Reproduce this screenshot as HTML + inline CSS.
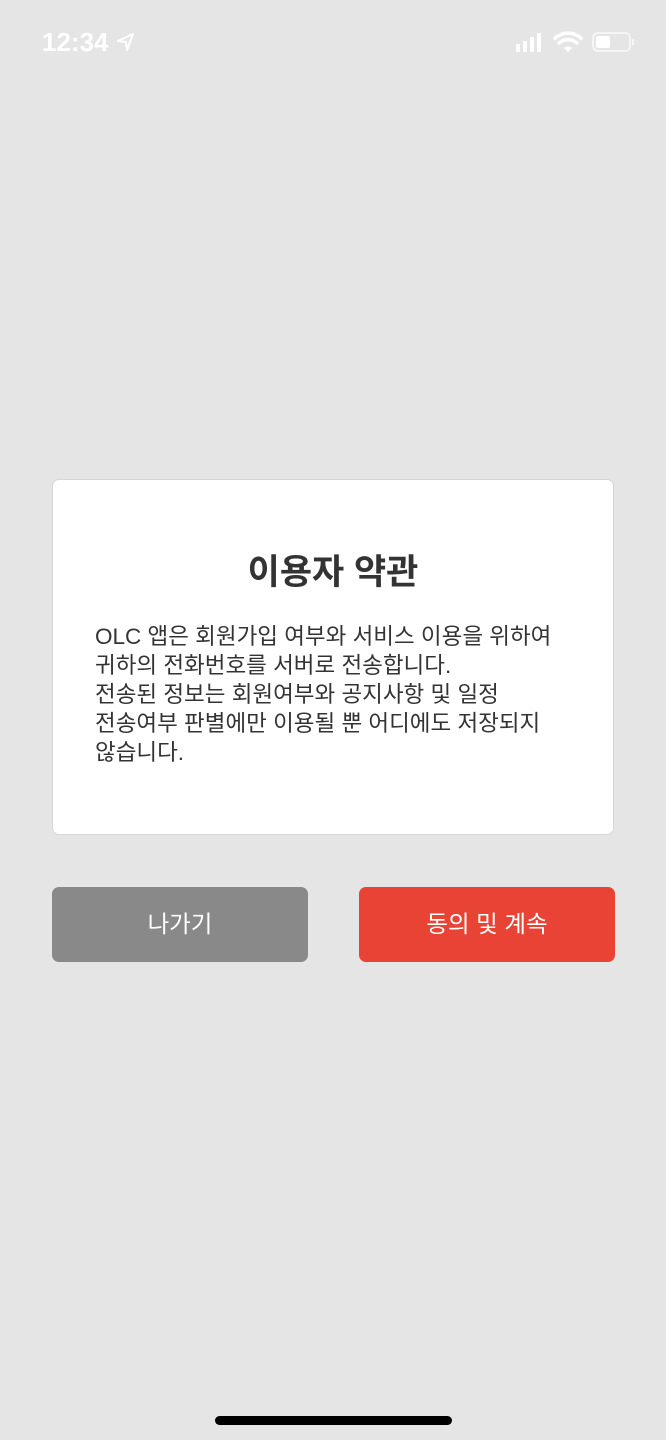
<!DOCTYPE html>
<html><head><meta charset="utf-8"><style>
*{margin:0;padding:0;box-sizing:border-box}
body{width:666px;height:1440px;background:#e5e5e5;position:relative;overflow:hidden;font-family:"Liberation Sans","Noto Sans CJK KR",sans-serif}
.time{position:absolute;left:42px;top:27px;color:#fff;font-size:26px;font-weight:bold}
.card{position:absolute;left:52px;top:479px;width:562px;height:356px;background:#fff;border:1px solid #d6d6d6;border-radius:7px}
.title{position:absolute;top:544px;left:0;width:666px;text-align:center;font-size:35px;font-weight:bold;color:#333}
.body{position:absolute;left:95px;top:622px;font-size:22.5px;line-height:29px;color:#333}
.btn{position:absolute;top:887px;width:256px;height:75px;border-radius:7px;color:#fff;font-size:23.5px;text-align:center;line-height:75px}
.home{position:absolute;left:215px;top:1416px;width:237px;height:9px;border-radius:5px;background:#000}
</style></head><body>
<div class="time">12:34</div>
<svg style="position:absolute;left:116px;top:32px" width="20" height="20" viewBox="0 0 20 20"><path d="M2 9 L17 2 L11 18 L10 10 Z" fill="none" stroke="#fff" stroke-width="2" stroke-linejoin="round"/></svg>
<svg style="position:absolute;left:514px;top:30px" width="122" height="24" viewBox="0 0 122 24">
<rect x="2" y="14" width="4" height="8" rx="1" fill="#fff"/><rect x="9" y="11" width="4" height="11" rx="1" fill="#fff"/><rect x="16" y="7" width="4" height="15" rx="1" fill="#fff"/><rect x="23" y="3" width="4" height="19" rx="1" fill="#fff"/>
<path d="M41 8 Q54 -2 67 8" fill="none" stroke="#fff" stroke-width="3.5" stroke-linecap="round"/><path d="M45 13 Q54 6 63 13" fill="none" stroke="#fff" stroke-width="3.5" stroke-linecap="round"/><path d="M50 18 L54 22 L58 18 Q54 15 50 18Z" fill="#fff"/>
<rect x="79" y="3" width="37" height="18" rx="5" fill="none" stroke="#fff" stroke-opacity=".6" stroke-width="2"/><rect x="82" y="6" width="14" height="12" rx="2" fill="#fff"/><rect x="118" y="9" width="2" height="6" fill="#fff" fill-opacity=".6"/>
</svg>
<div class="card"></div>
<div class="title">이용자 약관</div>
<div class="body">OLC 앱은 회원가입 여부와 서비스 이용을 위하여<br>귀하의 전화번호를 서버로 전송합니다.<br>전송된 정보는 회원여부와 공지사항 및 일정<br>전송여부 판별에만 이용될 뿐 어디에도 저장되지<br>않습니다.</div>
<div class="btn" style="left:52px;background:#898989">나가기</div>
<div class="btn" style="left:359px;background:#e84335">동의 및 계속</div>
<div class="home"></div>
</body></html>
